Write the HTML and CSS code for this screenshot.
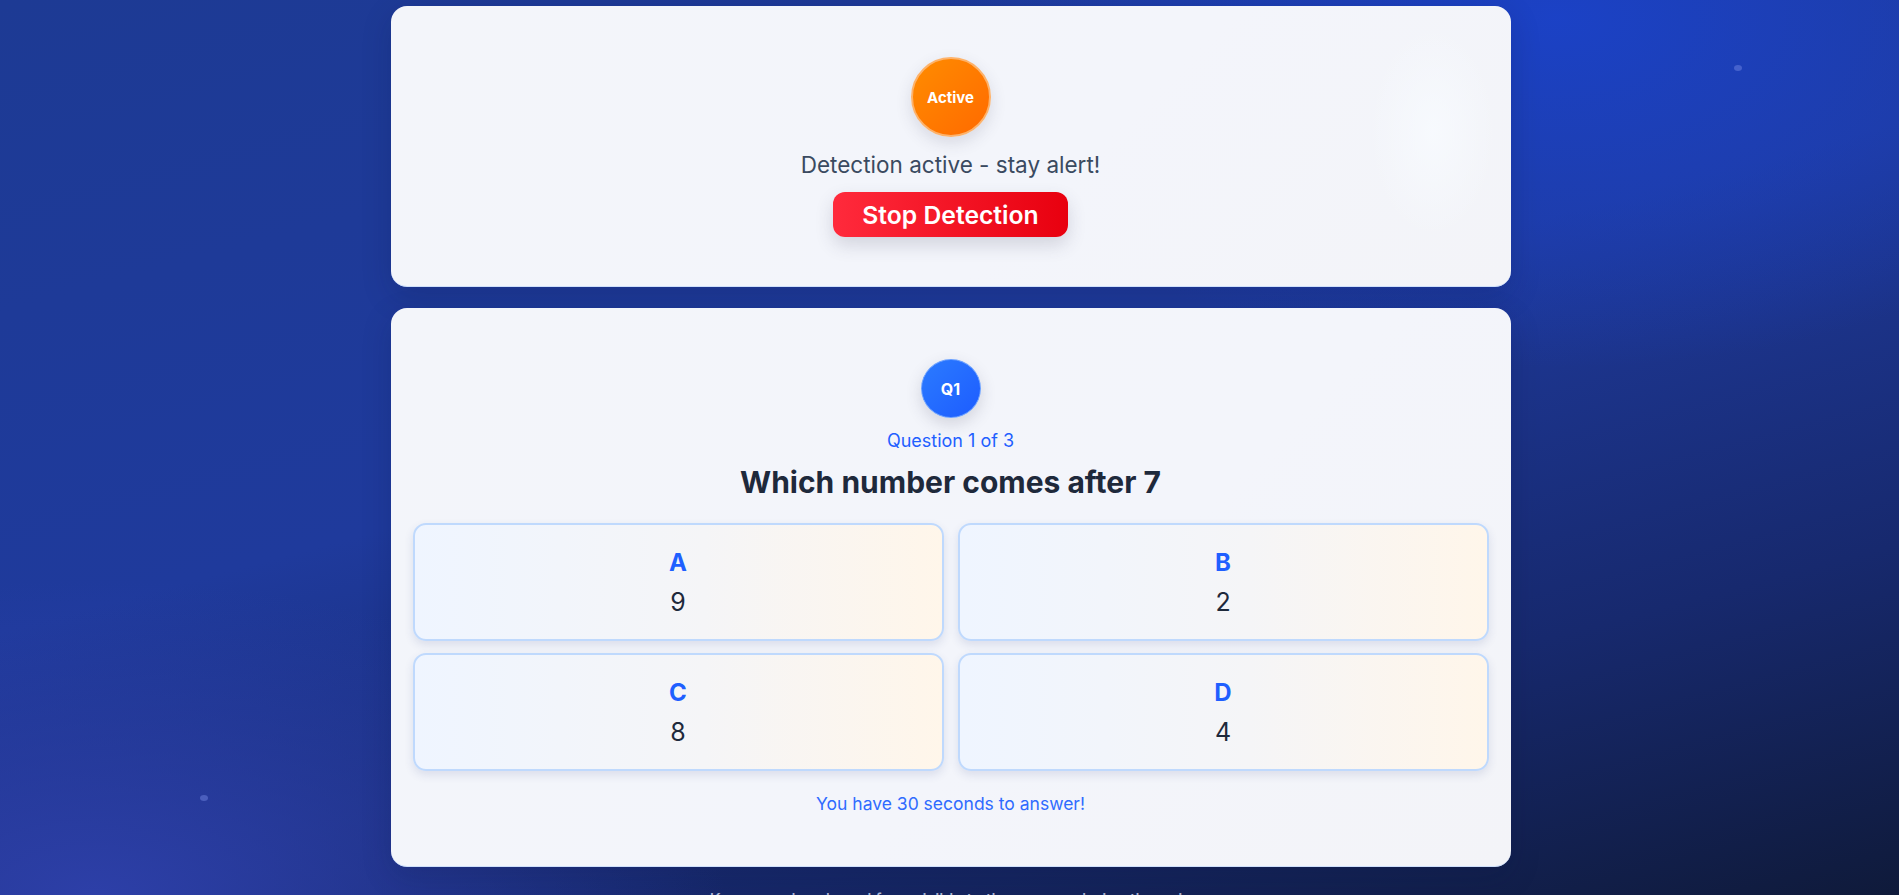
FILE: index.html
```html
<!DOCTYPE html>
<html lang="en">
<head>
<meta charset="utf-8">
<title>Detection Quiz</title>
<link rel="stylesheet" href="styles.css">
</head>
<body>
<div class="particle p1"></div>
<div class="particle p2"></div>
<main class="page">
  <section class="card status-card">
    <div class="status-badge">Active</div>
    <p class="status-text">Detection active - stay alert!</p>
    <button class="stop-btn">Stop Detection</button>
  </section>

  <section class="card quiz-card">
    <div class="q-badge">Q1</div>
    <p class="q-count">Question 1 of 3</p>
    <h2 class="q-title">Which number comes after 7</h2>
    <div class="options">
      <div class="option"><div class="opt-letter">A</div><div class="opt-value">9</div></div>
      <div class="option"><div class="opt-letter">B</div><div class="opt-value">2</div></div>
      <div class="option"><div class="opt-letter">C</div><div class="opt-value">8</div></div>
      <div class="option"><div class="opt-letter">D</div><div class="opt-value">4</div></div>
    </div>
    <p class="timer">You have 30 seconds to answer!</p>
  </section>

  <p class="footer-note">Keep your hands and face visible to the camera during the quiz</p>
</main>
</body>
</html>
```

FILE: styles.css
```css
* { box-sizing: border-box; }

html, body {
  margin: 0;
  height: 895px;
  overflow: hidden;
}

body {
  font-family: Inter, "Noto Sans", "Liberation Sans", sans-serif;
  background:
    radial-gradient(ellipse 900px 500px at 82% 2%, rgba(27, 66, 200, 0.95), rgba(27, 66, 200, 0) 70%),
    radial-gradient(ellipse 900px 450px at 5% 100%, rgba(46, 64, 170, 0.95), rgba(46, 64, 170, 0) 70%),
    linear-gradient(165deg, #1d3a94 0%, #1f3a9c 45%, #17296e 75%, #0f1a3a 100%);
  position: relative;
}

.particle {
  position: absolute;
  width: 8px;
  height: 6px;
  border-radius: 50%;
  background: rgba(120, 140, 230, 0.45);
}
.p1 { left: 1734px; top: 65px; }
.p2 { left: 200px; top: 795px; }

.page {
  width: 1120px;
  margin: 0 auto;
  padding-top: 6px;
  position: relative;
  left: 1px;
}

.card {
  background: linear-gradient(135deg, #f3f5fa 0%, #f3f5fb 60%, #f3f4f8 100%);
  border-radius: 16px;
  border-bottom: 1px solid #cfe0fb;
  display: flex;
  flex-direction: column;
  align-items: center;
  box-shadow: 0 10px 30px rgba(10, 20, 60, 0.18);
}

.status-card {
  padding: 51px 24px 49px;
  height: 281px;
  background:
    radial-gradient(ellipse 90px 150px at 93% 45%, rgba(248, 251, 255, 0.8), rgba(248, 251, 255, 0) 70%),
    linear-gradient(135deg, #f3f5fa 0%, #f3f5fb 60%, #f3f4f8 100%);
}

.status-badge {
  width: 80px;
  height: 80px;
  border-radius: 50%;
  background: linear-gradient(135deg, #ff8c00 0%, #ff6a00 100%);
  border: 2px solid #fdb26a;
  color: #fff;
  font-weight: 700;
  font-size: 15px;
  display: flex;
  align-items: center;
  justify-content: center;
  box-shadow: 0 6px 16px rgba(60, 60, 90, 0.15);
}

.status-text {
  margin: 14px 0 0;
  font-size: 22.5px;
  line-height: 28px;
  color: #3a4a60;
}

.stop-btn {
  margin-top: 13px;
  height: 45px;
  padding: 0 29px;
  border: none;
  border-radius: 12px;
  background: linear-gradient(90deg, #ff2a3c 0%, #e8000f 100%);
  color: #fff;
  font-family: inherit;
  font-weight: 600;
  font-size: 24.7px;
  box-shadow: 0 8px 18px rgba(60, 60, 90, 0.18);
}

.quiz-card {
  margin-top: 21px;
  padding: 51px 22px 50px;
  height: 559px;
}

.q-badge {
  width: 60px;
  height: 60px;
  border-radius: 50%;
  background: linear-gradient(135deg, #2b7bff 0%, #1d5cff 100%);
  border: 1px solid #6aa0ff;
  color: #fff;
  font-weight: 700;
  font-size: 16px;
  display: flex;
  align-items: center;
  justify-content: center;
  box-shadow: 0 6px 16px rgba(60, 60, 90, 0.18);
}

.q-count {
  margin: 11px 0 0;
  font-size: 18px;
  line-height: 24px;
  color: #1f5fff;
}

.q-title {
  margin: 10px 0 0;
  font-size: 30px;
  line-height: 38px;
  font-weight: 700;
  color: #1e293b;
}

.options {
  margin-top: 22px;
  width: 100%;
  display: grid;
  grid-template-columns: 1fr 1fr;
  gap: 12px 14px;
}

.option {
  height: 118px;
  border: 2px solid #bfd9fd;
  border-radius: 13px;
  background: linear-gradient(90deg, #eff5ff 0%, #f5f5f7 55%, #fff6ea 100%);
  padding: 20px;
  text-align: center;
  box-shadow: 0 4px 10px rgba(40, 60, 120, 0.12);
}

.opt-letter {
  font-size: 24px;
  line-height: 36px;
  font-weight: 700;
  color: #1f5fff;
  margin-bottom: 3px;
}

.opt-value {
  font-size: 25px;
  line-height: 36px;
  color: #1e293b;
}

.timer {
  margin: 21px 0 0;
  font-size: 17.5px;
  line-height: 24px;
  color: #2f6bff;
}

.footer-note {
  margin: 20px 0 0;
  text-align: center;
  font-size: 16px;
  font-weight: 500;
  line-height: 24px;
  color: rgba(225, 232, 255, 0.75);
}
```
